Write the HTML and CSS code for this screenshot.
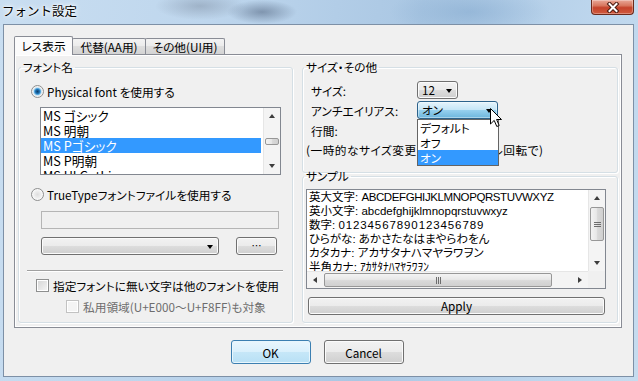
FILE: index.html
```html
<!DOCTYPE html>
<html lang="ja">

<head>
    <meta charset="UTF-8">
    <title>フォント設定</title>
    <link rel="stylesheet" href="styles.css">
</head>

<body>
    <div class="window">
        <div class="titlebar">
            <span class="title">フォント設定</span>
            <span class="close-btn">
                <svg width="14" height="11" viewBox="0 0 14 11">
                    <path d="M3.5 2 L10.5 9 M10.5 2 L3.5 9" stroke="#4a1a10" stroke-width="4" stroke-linecap="square" />
                    <path d="M3.5 2 L10.5 9 M10.5 2 L3.5 9" stroke="#fff" stroke-width="2" stroke-linecap="square" />
                </svg>
            </span>
        </div>

        <div class="client">
            <div class="tab-strip">
                <span class="tab tab-view active">レス表示</span>
                <span class="tab tab-alt">代替(AA用)</span>
                <span class="tab tab-other">その他(UI用)</span>
            </div>

            <div class="tab-panel">
                <fieldset class="group font-group">
                    <legend>フォント名</legend>

                    <label class="option option-physical"><span class="radio checked"></span>Physical font を使用する</label>

                    <div class="listbox">
                        <ul>
                            <li>MS ゴシック</li>
                            <li>MS 明朝</li>
                            <li class="selected">MS Pゴシック</li>
                            <li>MS P明朝</li>
                            <li>MS UI Gothic</li>
                        </ul>
                        <div class="vscroll">
                            <span class="sb-btn up"></span>
                            <div class="track">
                                <span class="thumb thumb-small"></span>
                            </div>
                            <span class="sb-btn down"></span>
                        </div>
                    </div>

                    <label class="option option-ttf"><span class="radio"></span>TrueTypeフォントファイルを使用する</label>

                    <div class="textbox disabled"></div>

                    <div class="file-row">
                        <div class="combo combo-file"></div>
                        <button class="btn btn-browse">…</button>
                    </div>

                    <hr class="sep">

                    <label class="check-row check-fallback"><span class="check"></span>指定フォントに無い文字は他のフォントを使用</label>
                    <label class="check-row check-private disabled"><span class="check"></span>私用領域(U+E000～U+F8FF)も対象</label>
                </fieldset>

                <div class="right-col">
                    <fieldset class="group size-group">
                        <legend>サイズ・その他</legend>
                        <div class="size-grid">
                            <span>サイズ:</span>
                            <div class="combo combo-size">12</div>
                            <span>アンチエイリアス:</span>
                            <div class="combo combo-aa pressed">オン
                                <ul class="dropdown">
                                    <li>デフォルト</li>
                                    <li>オフ</li>
                                    <li class="selected">オン</li>
                                </ul>
                                <svg class="cursor" width="13" height="20" viewBox="0 0 13 20">
                                    <path d="M0.5 0.5 L0.5 16 L4.2 12.4 L6.8 18.5 L9.2 17.5 L6.6 11.5 L11.5 11.5 Z" fill="#fff" stroke="#000" stroke-width="1" stroke-linejoin="miter" />
                                </svg>
                            </div>
                            <span>行間:</span>
                            <span></span>
                        </div>
                        <p class="hint">(一時的なサイズ変更はCtrl+ホイール回転で)</p>
                    </fieldset>

                    <fieldset class="group sample-group">
                        <legend>サンプル</legend>
                        <div class="sample-box">
                            <div class="sample-text">
                                <p>英大文字: <span class="upper">ABCDEFGHIJKLMNOPQRSTUVWXYZ</span></p>
                                <p>英小文字: abcdefghijklmnopqrstuvwxyz</p>
                                <p>数字: <span class="digits">01234567890123456789</span></p>
                                <p>ひらがな: あかさたなはまやらわをん</p>
                                <p>カタカナ: アカサタナハマヤラワヲン</p>
                                <p>半角カナ: ｱｶｻﾀﾅﾊﾏﾔﾗﾜｦﾝ</p>
                                <p>特殊文字: ＼～－‖…‥♪☆★○●◎◇◆□■△▲▽▼</p>
                            </div>
                            <div class="vscroll">
                                <span class="sb-btn up"></span>
                                <div class="track">
                                    <span class="thumb thumb-v"></span>
                                </div>
                                <span class="sb-btn down"></span>
                            </div>
                            <div class="hscroll">
                                <span class="sb-btn left"></span>
                                <div class="track">
                                    <span class="thumb thumb-h"></span>
                                </div>
                                <span class="sb-btn right"></span>
                            </div>
                            <div class="corner"></div>
                        </div>
                        <button class="btn btn-apply">Apply</button>
                    </fieldset>
                </div>
            </div>

            <div class="dialog-buttons">
                <button class="btn default">OK</button>
                <button class="btn">Cancel</button>
            </div>
        </div>
    </div>
</body>

</html>
```

FILE: styles.css
```css
* {
    box-sizing: border-box;
}

body {
    margin: 0;
    font-family: "Noto Sans CJK JP", "Noto Sans", sans-serif;
    font-size: 11.7px;
    color: #000;
    font-feature-settings: "palt";
}

/* aero window frame */
.window {
    width: 638px;
    height: 381px;
    display: flex;
    flex-direction: column;
    padding: 0 4px 4px 3px;
    overflow: hidden;
    background:
        radial-gradient(ellipse 45px 14px at 200px 6px, rgba(120, 135, 155, 0.45), transparent),
        radial-gradient(ellipse 35px 12px at 262px 12px, rgba(70, 88, 115, 0.5), transparent),
        radial-gradient(ellipse 80px 26px at 470px 12px, rgba(120, 160, 200, 0.45), transparent),
        linear-gradient(100deg, #c9def1 0%, #bed6ed 30%, #aac7e3 60%, #bdd6ed 85%, #c6dcef 100%);
}

.titlebar {
    height: 24px;
    flex: none;
    display: flex;
    justify-content: space-between;
    align-items: flex-start;
}

.title {
    margin: 3px 0 0 -1px;
    font-size: 12.5px;
    line-height: 16px;
    font-feature-settings: normal;
    text-shadow: 0 0 4px #fff, 0 0 7px #fff, 0 0 2px #fff;
}

.close-btn {
    width: 43px;
    height: 15px;
    margin-right: 0;
    display: flex;
    align-items: center;
    justify-content: center;
    border: 1px solid #6b2a1c;
    border-top: none;
    border-radius: 0 0 4px 4px;
    background: linear-gradient(#e9a898, #d8775f 40%, #c5432b 55%, #d05a3e);
    box-shadow: inset 0 0 0 1px rgba(255, 255, 255, 0.3);
}

.client {
    flex: 1;
    display: flex;
    flex-direction: column;
    padding: 11px 0 0 10px;
    background: #f0f0f0;
    border: 1px solid #7d90a6;
}

/* tabs */
.tab-strip {
    display: flex;
    align-items: flex-end;
    height: 18px;
}

.tab {
    height: 16px;
    margin-left: -1px;
    border: 1px solid #898c95;
    border-bottom: none;
    border-radius: 2px 2px 0 0;
    text-align: center;
    line-height: 15px;
    background: linear-gradient(#f3f3f3, #ebebeb 50%, #dedede 50%, #d3d3d3);
}

.tab.active {
    height: 19px;
    margin: 0 0 -1px 0;
    position: relative;
    z-index: 1;
    line-height: 17px;
    background: #fbfbfb;
}

.tab-view {
    width: 59px;
}

.tab-alt {
    width: 74px;
}

.tab-other {
    width: 80px;
}

.tab-panel {
    width: 608px;
    height: 274px;
    display: flex;
    gap: 9px;
    padding: 5px 3px 4px 3px;
    border: 1px solid #898c95;
    background: #f0f0f0;
    box-shadow: inset 1px 1px #fff, inset -1px -1px #fff;
}

/* group boxes */
.group {
    margin: 0;
    padding: 0;
    min-width: 0;
    border: 1px solid #d5dfe5;
    border-radius: 3px;
    box-shadow: 1px 1px 0 #fff, inset 1px 1px 0 #fff;
}

.group legend {
    padding: 0 2px;
    margin-left: 1px;
    line-height: 14px;
}

.font-group {
    width: 275px;
    height: 263px;
}

.font-group legend {
    margin-left: 2px;
}

.option {
    display: flex;
    align-items: center;
    gap: 3px;
    height: 16px;
}

.option-physical {
    margin: 9px 0 0 12px;
}

.option-ttf {
    margin: 11px 0 0 12px;
}

.radio {
    width: 13px;
    height: 13px;
    flex: none;
    border: 1px solid #8e8f8f;
    border-radius: 50%;
    background: radial-gradient(circle, #dedede 0, #ececec 3px, #f7f7f7 5px);
}

.radio.checked {
    background: radial-gradient(circle, #0d3e6a 0, #1d6fb0 2px, #62b1e4 3.2px, #c9e3f3 4px, #ececec 4.6px, #f7f7f7 5.5px);
}

/* list box */
.listbox {
    width: 241px;
    height: 68px;
    margin: 8px 0 0 21px;
    display: flex;
    border: 1px solid #828790;
    background: #fff;
}

.listbox ul {
    flex: 1;
    margin: 0;
    padding: 0;
    list-style: none;
    overflow: hidden;
    font-size: 12.7px;
}

.listbox li {
    height: 15px;
    padding-left: 2px;
    line-height: 15px;
    white-space: nowrap;
}

.listbox li.selected {
    margin-right: 2px;
    background: #3399ff;
    color: #fff;
}

/* scroll bars */
.vscroll,
.hscroll {
    display: flex;
    background: #f4f4f4;
}

.vscroll {
    width: 17px;
    flex-direction: column;
    border-left: 1px solid #e6e6e6;
}

.hscroll {
    height: 17px;
    border-top: 1px solid #e6e6e6;
}

.track {
    flex: 1;
    display: flex;
}

.vscroll .track {
    flex-direction: column;
}

.sb-btn {
    width: 16px;
    height: 16px;
    flex: none;
    display: flex;
    align-items: center;
    justify-content: center;
}

.sb-btn::before {
    content: "";
    border: 3.5px solid transparent;
}

.sb-btn.up::before {
    border-top-width: 0;
    border-bottom: 4px solid #3d3d3d;
}

.sb-btn.down::before {
    border-bottom-width: 0;
    border-top: 4px solid #3d3d3d;
}

.sb-btn.left::before {
    border-left-width: 0;
    border-right: 4px solid #3d3d3d;
}

.sb-btn.right::before {
    border-right-width: 0;
    border-left: 4px solid #3d3d3d;
}

.thumb {
    display: flex;
    align-items: center;
    justify-content: center;
    border: 1px solid #979797;
    border-radius: 2px;
}

.thumb-small,
.thumb-v {
    margin: 0 1px;
    background: linear-gradient(90deg, #f3f3f3, #e8e8e8 45%, #d9d9d9 55%, #d0d0d0);
}

.thumb-small {
    height: 7px;
    margin-top: 14px;
}

.thumb-v {
    height: 34px;
    margin-top: 1px;
}

.thumb-v::before {
    content: "";
    width: 7px;
    height: 5px;
    background: repeating-linear-gradient(#6d6d6d 0 1px, transparent 1px 2px);
}

.thumb-h {
    width: 228px;
    margin: 1px 0 1px 1px;
    background: linear-gradient(#f3f3f3, #e8e8e8 45%, #d9d9d9 55%, #d0d0d0);
}

.thumb-h::before {
    content: "";
    width: 5px;
    height: 7px;
    background: repeating-linear-gradient(90deg, #6d6d6d 0 1px, transparent 1px 2px);
}

/* inputs */
.textbox {
    width: 238px;
    height: 18px;
    margin: 9px 0 0 22px;
    border: 1px solid #b5b5b5;
    background: #f0f0f0;
}

.file-row {
    display: flex;
    gap: 17px;
    margin: 8px 0 0 22px;
}

.combo {
    height: 18px;
    display: flex;
    align-items: center;
    padding-left: 4px;
    border: 1px solid #707070;
    border-radius: 3px;
    background: linear-gradient(#f2f2f2, #ebebeb 50%, #dddddd 50%, #cfcfcf);
    box-shadow: inset 0 0 0 1px #fbfbfb;
    line-height: 16px;
}

.combo::after {
    content: "";
    margin: 1px 5px 0 auto;
    border: 3.5px solid transparent;
    border-bottom-width: 0;
    border-top: 4px solid #000;
}

.combo-file {
    width: 178px;
}

.combo-size {
    width: 41px;
}

.combo-aa {
    width: 81px;
    position: relative;
}

.combo.pressed {
    border-color: #2c628b;
    background: linear-gradient(#e5f4fc, #c4e5f6 50%, #98d1ef 50%, #6cb6dd);
    box-shadow: inset 0 0 0 1px rgba(255, 255, 255, 0.4);
}

.btn {
    padding: 0;
    font: inherit;
    color: #000;
    border: 1px solid #707070;
    border-radius: 3px;
    background: linear-gradient(#f2f2f2, #ebebeb 50%, #dddddd 50%, #cfcfcf);
    box-shadow: inset 0 0 0 1px #fbfbfb;
}

.btn-browse {
    width: 41px;
    height: 18px;
    line-height: 14px;
    font-size: 10px;
}

.sep {
    width: 256px;
    height: 2px;
    margin: 15px 0 0 8px;
    border: none;
    border-top: 1px solid #a0a0a0;
    border-bottom: 1px solid #fff;
}

.check-row {
    display: flex;
    align-items: center;
    gap: 4px;
    height: 14px;
}

.check-fallback {
    margin: 6px 0 0 17px;
}

.check-private {
    margin: 7px 0 0 47px;
}

.check {
    width: 13px;
    height: 13px;
    flex: none;
    border: 1px solid #8e8f8f;
    background: linear-gradient(135deg, #d4d4d4, #f6f6f6);
    box-shadow: inset 0 0 0 1px #fff;
}

.check-row.disabled {
    color: #6d6d6d;
}

.check-row.disabled .check {
    border-color: #c2c2c2;
    background: #f4f4f4;
}

/* right column */
.right-col {
    width: 316px;
    display: flex;
    flex-direction: column;
}

.size-group {
    height: 113px;
}

.size-grid {
    display: grid;
    grid-template-columns: 106px auto;
    grid-auto-rows: 20px;
    align-items: center;
    justify-items: start;
    margin: 6px 0 0 8px;
}

.hint {
    margin: 0 0 0 3px;
    line-height: 20px;
    letter-spacing: 0.5px;
    white-space: nowrap;
}

.dropdown {
    position: absolute;
    top: calc(100% + 1px);
    left: -1px;
    z-index: 2;
    width: 82px;
    margin: 0;
    padding: 0;
    list-style: none;
    border: 1px solid #646464;
    background: #fff;
    letter-spacing: 0;
}

.dropdown li {
    height: 15px;
    padding-left: 2px;
    line-height: 15px;
}

.dropdown li.selected {
    background: #3399ff;
    color: #fff;
}

.cursor {
    position: absolute;
    left: 72px;
    top: 6px;
    z-index: 3;
}

.sample-group {
    flex: 1;
    margin-top: -4px;
}

.sample-box {
    width: 300px;
    height: 100px;
    margin: 6px 0 0 3px;
    display: grid;
    grid-template-columns: 1fr 17px;
    grid-template-rows: 1fr 17px;
    border: 1px solid #828790;
    background: #fff;
}

.sample-text {
    overflow: hidden;
    padding-left: 2px;
    font-family: "Liberation Sans", "Noto Sans CJK JP", sans-serif;
    font-size: 11.5px;
    line-height: 14px;
    white-space: nowrap;
}

.sample-text p {
    margin: 0;
}

.upper {
    letter-spacing: -0.4px;
}

.digits {
    letter-spacing: 0.9px;
}

.corner {
    background: #f0f0f0;
}

.btn-apply {
    width: 297px;
    height: 18px;
    margin: 8px 0 0 5px;
    line-height: 14px;
}

/* OK / Cancel */
.dialog-buttons {
    display: flex;
    justify-content: center;
    gap: 13px;
    margin-top: 12px;
    padding-right: 13px;
}

.dialog-buttons .btn {
    width: 80px;
    height: 24px;
}

.btn.default {
    border-color: #3c7fb1;
    background: linear-gradient(#eaf6fd, #d9f0fc 50%, #c6e7f8 50%, #b8e0f5);
    box-shadow: inset 0 0 0 1px #e8f6fd;
}
```
